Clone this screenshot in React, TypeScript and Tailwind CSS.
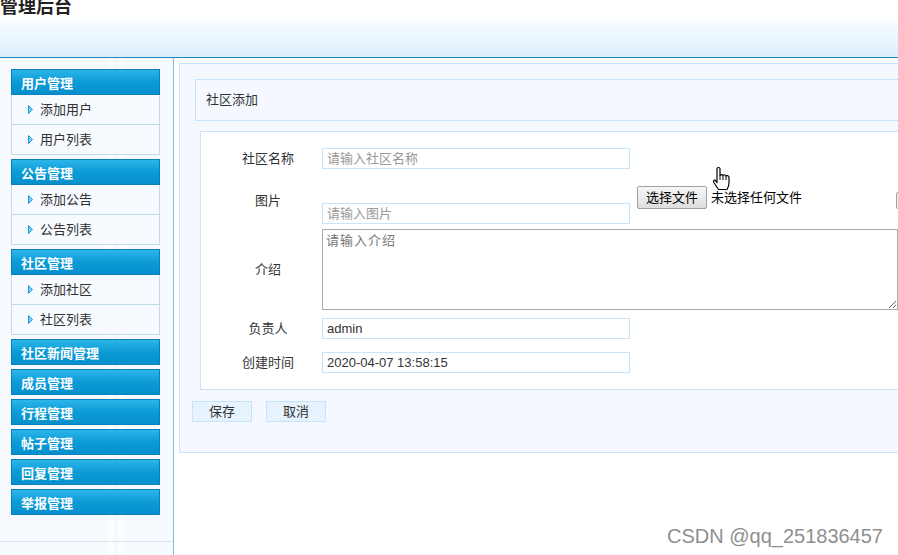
const menus = [
  { title: "用户管理", items: ["添加用户", "用户列表"] },
  { title: "公告管理", items: ["添加公告", "公告列表"] },
  { title: "社区管理", items: ["添加社区", "社区列表"] },
  { title: "社区新闻管理", items: [] },
  { title: "成员管理", items: [] },
  { title: "行程管理", items: [] },
  { title: "帖子管理", items: [] },
  { title: "回复管理", items: [] },
  { title: "举报管理", items: [] },
];

// small outlined arrow in front of each menu item
function Arrow() {
  return (
    <svg width="5" height="9" viewBox="0 0 5 9" className="shrink-0">
      <path d="M0.5 0.5 L4.5 4.5 L0.5 8.5 Z" fill="#7fd0f2" stroke="#1a9ad6" strokeWidth="1" />
    </svg>
  );
}

// hand pointer cursor from the screenshot
function HandCursor() {
  return (
    <svg width="19" height="25" viewBox="0 0 19 25" className="absolute left-[712px] top-[166px]">
      <path
        d="M5 2.5 Q6.5 0 8 2.5 L8 9.5 Q9.5 7.8 11 9.5 Q12.5 7.8 14 10 Q15.5 8.8 17 11 L17 16.5 Q17 20.5 15 23.5 L6.5 23.5 Q4.5 20.5 1.8 16.5 Q0.8 14 3 14.2 L5 16.5 Z"
        fill="#ffffff"
        stroke="#000000"
        strokeWidth="1.2"
        strokeLinejoin="round"
      />
      <path d="M8 9.5 L8 14 M11 9.5 L11 14 M14 10 L14 14" stroke="#000000" strokeWidth="1" fill="none" />
    </svg>
  );
}

function Field({ label, value, placeholder }: { label: string; value?: string; placeholder?: string }) {
  return (
    <div className="flex items-center h-[21px]">
      <div className="w-[108px] text-center text-[13px] text-[#333]">{label}</div>
      <input
        readOnly
        value={value}
        placeholder={placeholder}
        className="w-[308px] h-[21px] border border-[#c6e5fb] bg-white px-[4px] text-[13px] text-[#333] placeholder:text-[#999] outline-none"
      />
    </div>
  );
}

export default function App() {
  return (
    <div
      className="w-[898px] h-[555px] overflow-hidden bg-white relative flex flex-col"
      style={{ fontFamily: '"Liberation Sans", "Noto Sans CJK SC", sans-serif' }}
    >
      {/* Title */}
      <div className="h-[20px] shrink-0 overflow-hidden">
        <div className="text-[18px] leading-[18px] font-bold text-[#222] -mt-[2px]">管理后台</div>
      </div>

      {/* Header band */}
      <div className="h-[38px] shrink-0 bg-gradient-to-b from-[#f9fcff] to-[#dbeffd] border-b border-[#1a87c0]" />

      <div className="flex flex-1 min-h-0">
        {/* Sidebar */}
        <aside className="w-[174px] shrink-0 border-r border-[#86b9dc] bg-[linear-gradient(90deg,#f7faff_0,#f7faff_107px,#ffffff_111px,#f2f8ff_116px,#ffffff_121px,#f7faff_126px,#f7faff_100%)] flex flex-col pt-[11px]">
          {menus.map((m) => (
            <div key={m.title} className="ml-[11px] w-[149px] mb-[4px]">
              <div className="h-[26px] border border-[#0b80be] bg-gradient-to-b from-[#2ab6e8] via-[#0a9bd6] to-[#0690cc] pl-[9px] pt-[3px] flex items-center text-[13px] font-bold text-white">
                {m.title}
              </div>
              {m.items.map((it) => (
                <div
                  key={it}
                  className="h-[30px] border-x border-b border-[#c3dbe6] bg-[#f7faff] flex items-center pl-[16px] gap-[7px] text-[13px] text-[#333]"
                >
                  <Arrow />
                  <span>{it}</span>
                </div>
              ))}
            </div>
          ))}
          <div className="mt-auto mb-[13px] border-t border-dotted border-[#b3d3de]" />
        </aside>

        {/* Main content */}
        <main className="flex-1 min-w-0 pt-[5px] pl-[5px]">
          <div className="w-[760px] h-[390px] border border-[#c6e4f9] bg-[#f5f9ff] pt-[15px] pl-[12px]">
            <div className="ml-[3px] h-[42px] border border-[#c6e4f9] bg-[#f5f9ff] flex items-center pl-[10px] text-[13px] text-[#333]">
              社区添加
            </div>

            <div className="ml-[8px] mt-[10px] border border-[#c6e4f9] bg-white pl-[13px] pt-[16px] pb-[16px] overflow-hidden">
              <Field label="社区名称" placeholder="请输入社区名称" />

              <div className="flex h-[50px] mt-[5px]">
                <div className="w-[108px] self-center pt-[4px] text-center text-[13px] text-[#333]">图片</div>
                <input
                  readOnly
                  placeholder="请输入图片"
                  className="self-end w-[308px] h-[21px] border border-[#c6e5fb] bg-white px-[4px] text-[13px] placeholder:text-[#999] outline-none"
                />
                <div className="self-end mb-[15px] ml-[7px] flex items-center shrink-0">
                  <div className="h-[23px] w-[70px] border border-[#a0a0a0] rounded-[2px] bg-gradient-to-b from-[#f6f6f6] to-[#dedede] flex items-center justify-center text-[13px] text-black">
                    选择文件
                  </div>
                  <span className="ml-[4px] text-[13px] text-black w-[185px]">未选择任何文件</span>
                  <div className="h-[17px] w-[30px] mt-[6px] border border-[#a0a0a0] rounded-[2px] bg-[#eeeeee]" />
                </div>
              </div>

              <div className="flex items-center mt-[5px]">
                <div className="w-[108px] text-center text-[13px] text-[#333]">介绍</div>
                <textarea
                  readOnly
                  placeholder="请输入介绍"
                  className="w-[576px] h-[81px] shrink-0 border border-[#a9a9a9] bg-white px-[3px] py-[1px] text-[13px] tracking-[1px] placeholder:text-[#777] outline-none"
                />
              </div>

              <div className="mt-[8px]">
                <Field label="负责人" value="admin" />
              </div>
              <div className="mt-[13px]">
                <Field label="创建时间" value="2020-04-07 13:58:15" />
              </div>
            </div>

            <div className="flex gap-[14px] mt-[11px]">
              <button className="w-[60px] h-[21px] border border-[#c6e4f9] bg-[#e6f2fe] text-[13px] text-[#333]">保存</button>
              <button className="w-[60px] h-[21px] border border-[#c6e4f9] bg-[#e6f2fe] text-[13px] text-[#333]">取消</button>
            </div>
          </div>
        </main>
      </div>

      <HandCursor />

      {/* watermark */}
      <div className="absolute right-[15px] bottom-[9px] text-[20px] text-[#8f8f8f] leading-none">CSDN @qq_251836457</div>
    </div>
  );
}
